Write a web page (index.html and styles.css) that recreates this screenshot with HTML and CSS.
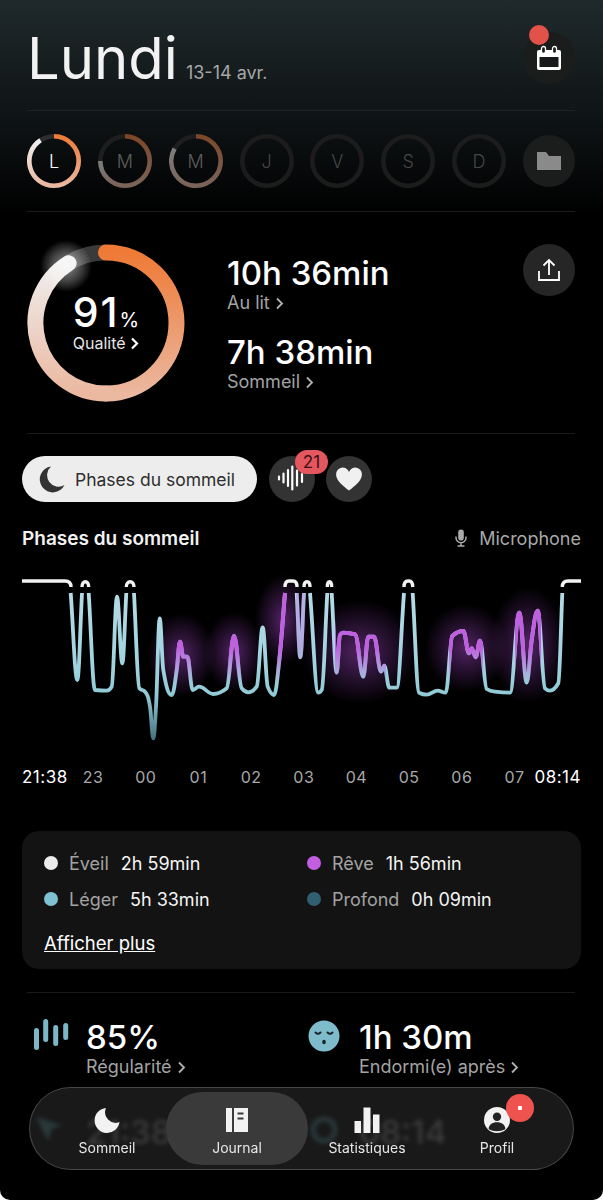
FILE: index.html
```html
<!DOCTYPE html>
<html lang="fr">
<head>
  <meta charset="UTF-8">
  <meta name="viewport" content="width=device-width, initial-scale=1.0">
  <title>Journal de sommeil</title>
  <link rel="stylesheet" href="styles.css">
</head>
<body>
  <div class="app">
    <header class="top">
      <div class="title-group">
        <h1 class="day-title">Lundi</h1>
        <span class="day-date">13-14 avr.</span>
      </div>
      <button class="round-btn calendar-btn">
        <span class="calendar-dot"></span>
        <svg width="28" height="26" viewBox="0 0 28 26">
          <rect x="2" y="5" width="24" height="20" rx="2" fill="#fff"/>
          <rect x="4.5" y="12" width="19" height="10" fill="#17191a"/>
          <rect x="6.5" y="1.5" width="4" height="7" rx="2" fill="#17191a" stroke="#fff" stroke-width="1.3"/>
          <rect x="17.5" y="1.5" width="4" height="7" rx="2" fill="#17191a" stroke="#fff" stroke-width="1.3"/>
        </svg>
      </button>
    </header>

    <section class="days">
      <div class="day-ring day-on">
        <svg width="54" height="54" viewBox="0 0 54 54" fill="none">
          <defs>
            <linearGradient id="arcRight" x1="0" y1="0" x2="0" y2="1">
              <stop offset="0" stop-color="#ee7a36"/>
              <stop offset="1" stop-color="#ebb8a0"/>
            </linearGradient>
            <linearGradient id="arcLeft" x1="0" y1="1" x2="0" y2="0">
              <stop offset="0" stop-color="#ebb8a0"/>
              <stop offset="1" stop-color="#efefef"/>
            </linearGradient>
          </defs>
          <circle cx="27" cy="27" r="24.7" stroke="#2e2e2e" stroke-width="4.6"/>
          <path d="M27 2.3A24.7 24.7 0 0 1 27 51.7" stroke="url(#arcRight)" stroke-width="4.6"/>
          <path d="M27 51.7A24.7 24.7 0 0 1 13.5 6.3" stroke="url(#arcLeft)" stroke-width="4.6"/>
        </svg>
        <span>L</span>
      </div>
      <div class="day-ring">
        <svg width="54" height="54" viewBox="0 0 54 54" fill="none">
          <circle cx="27" cy="27" r="24.7" stroke="#1e1e1e" stroke-width="4.6"/>
          <g opacity="0.45">
            <path d="M27 2.3A24.7 24.7 0 0 1 27 51.7" stroke="url(#arcRight)" stroke-width="4.6"/>
            <path d="M27 51.7A24.7 24.7 0 0 1 2.3 27" stroke="url(#arcLeft)" stroke-width="4.6"/>
          </g>
        </svg>
        <span>M</span>
      </div>
      <div class="day-ring">
        <svg width="54" height="54" viewBox="0 0 54 54" fill="none">
          <circle cx="27" cy="27" r="24.7" stroke="#1e1e1e" stroke-width="4.6"/>
          <g opacity="0.45">
            <path d="M27 2.3A24.7 24.7 0 0 1 27 51.7" stroke="url(#arcRight)" stroke-width="4.6"/>
            <path d="M27 51.7A24.7 24.7 0 0 1 5.6 14.6" stroke="url(#arcLeft)" stroke-width="4.6"/>
          </g>
        </svg>
        <span>M</span>
      </div>
      <div class="day-ring day-off">
        <svg width="54" height="54" viewBox="0 0 54 54" fill="none"><circle cx="27" cy="27" r="24.7" stroke="#1c1c1c" stroke-width="4.6"/></svg>
        <span>J</span>
      </div>
      <div class="day-ring day-off">
        <svg width="54" height="54" viewBox="0 0 54 54" fill="none"><circle cx="27" cy="27" r="24.7" stroke="#1c1c1c" stroke-width="4.6"/></svg>
        <span>V</span>
      </div>
      <div class="day-ring day-off">
        <svg width="54" height="54" viewBox="0 0 54 54" fill="none"><circle cx="27" cy="27" r="24.7" stroke="#1c1c1c" stroke-width="4.6"/></svg>
        <span>S</span>
      </div>
      <div class="day-ring day-off">
        <svg width="54" height="54" viewBox="0 0 54 54" fill="none"><circle cx="27" cy="27" r="24.7" stroke="#1c1c1c" stroke-width="4.6"/></svg>
        <span>D</span>
      </div>
      <button class="round-btn">
        <svg width="24" height="18" viewBox="0 0 24 18"><path d="M0 0h9l3 4h12v14H0z" fill="#8a8a8a"/></svg>
      </button>
    </section>

    <section class="summary">
      <div class="quality">
        <svg class="quality-ring" width="170" height="170" viewBox="0 0 170 170" fill="none">
          <defs>
            <radialGradient id="ringGlow">
              <stop offset="0" stop-color="#fff" stop-opacity="0.55"/>
              <stop offset="0.6" stop-color="#fff" stop-opacity="0.25"/>
              <stop offset="1" stop-color="#fff" stop-opacity="0"/>
            </radialGradient>
          </defs>
          <path d="M47.1 25.2A70.5 70.5 0 0 1 85 14.5" stroke="#3a3a3a" stroke-width="16"/>
          <path d="M85 14.5A70.5 70.5 0 0 1 85 155.5" stroke="url(#arcRight)" stroke-width="16" stroke-linecap="round"/>
          <path d="M85 155.5A70.5 70.5 0 0 1 47.6 25.2" stroke="url(#arcLeft)" stroke-width="16" stroke-linecap="round"/>
          <circle cx="45" cy="28" r="26" fill="url(#ringGlow)"/>
        </svg>
        <div class="quality-text">
          <div class="quality-value">91<small>%</small></div>
          <div class="quality-label">Qualité <svg class="chev" width="9" height="13" viewBox="0 0 9 13"><path d="M2 1.5l5 5-5 5"/></svg></div>
        </div>
      </div>
      <div class="durations">
        <div class="big-value">10h 36min</div>
        <div class="sub-label">Au lit <svg class="chev" width="9" height="13" viewBox="0 0 9 13"><path d="M2 1.5l5 5-5 5"/></svg></div>
        <div class="big-value second">7h 38min</div>
        <div class="sub-label">Sommeil <svg class="chev" width="9" height="13" viewBox="0 0 9 13"><path d="M2 1.5l5 5-5 5"/></svg></div>
      </div>
      <button class="round-btn share-btn">
        <svg width="24" height="24" viewBox="0 0 24 24" fill="none" stroke="#fff" stroke-width="1.8">
          <path d="M2 13v9h20v-9"/>
          <path d="M12 17V2M6.5 7.5L12 2l5.5 5.5"/>
        </svg>
      </button>
    </section>

    <div class="tabs">
      <div class="tab-pill">
        <svg width="26" height="27" viewBox="0 0 26 27"><path d="M12 0.5A13 13 0 1 0 25.5 19A11.5 11.5 0 0 1 12 0.5z" fill="#333"/></svg>
        <span>Phases du sommeil</span>
      </div>
      <div class="tab-icon">
        <svg width="46" height="46" viewBox="0 0 46 46" stroke="#fff" stroke-width="2.2" stroke-linecap="round">
          <path d="M10 20.5v3M14.5 17.5v9M19 14v16M23.3 10.5v23M28 14.5v15M33 18v8"/>
        </svg>
        <span class="tab-badge">21</span>
      </div>
      <div class="tab-icon">
        <svg width="28" height="24" viewBox="0 0 30 26"><path d="M15 25.5C9 20.5 1 15 1 8A7.2 7.2 0 0 1 15 5.5A7.2 7.2 0 0 1 29 8C29 15 21 20.5 15 25.5z" fill="#f0f0f0"/></svg>
      </div>
    </div>

    <div class="chart-head">
      <h2>Phases du sommeil</h2>
      <div class="mic">
        <svg width="12" height="18" viewBox="0 0 12 18" fill="none" stroke="#aaa" stroke-width="1.5">
          <rect x="3.2" y="0.5" width="5.6" height="11" rx="2.8" fill="#aaa" stroke="none"/>
          <path d="M1 7.5v1.2a5 5 0 0 0 10 0V7.5M6 13.7v3M2.5 17h7"/>
        </svg>
        <span>Microphone</span>
      </div>
    </div>

    <svg class="chart" width="603" height="190" viewBox="0 570 603 190" fill="none">
      <defs>
        <linearGradient id="lineBlue" gradientUnits="userSpaceOnUse" x1="0" y1="593" x2="0" y2="740">
          <stop offset="0" stop-color="#b4dbe6"/>
          <stop offset="0.5" stop-color="#9fd3de"/>
          <stop offset="0.7" stop-color="#90c9d5"/>
          <stop offset="1" stop-color="#44707f"/>
        </linearGradient>
        <linearGradient id="dreamFade" gradientUnits="userSpaceOnUse" x1="0" y1="648" x2="0" y2="684">
          <stop offset="0" stop-color="#fff"/>
          <stop offset="1" stop-color="#000"/>
        </linearGradient>
        <radialGradient id="dreamGlow">
          <stop offset="0" stop-color="#b04cd8" stop-opacity="0.46"/>
          <stop offset="0.55" stop-color="#b04cd8" stop-opacity="0.2"/>
          <stop offset="1" stop-color="#b04cd8" stop-opacity="0"/>
        </radialGradient>
        <mask id="dreamMask" maskUnits="userSpaceOnUse" x="0" y="570" width="603" height="190">
          <rect x="172" y="570" width="20" height="190" fill="url(#dreamFade)"/>
          <rect x="226" y="570" width="16" height="190" fill="url(#dreamFade)"/>
          <rect x="272" y="570" width="16" height="190" fill="url(#dreamFade)"/>
          <rect x="296" y="570" width="9" height="190" fill="url(#dreamFade)" opacity="0.35"/>
          <rect x="335" y="570" width="51" height="190" fill="url(#dreamFade)"/>
          <rect x="449" y="570" width="34" height="190" fill="url(#dreamFade)"/>
          <rect x="515" y="570" width="26" height="190" fill="url(#dreamFade)"/>
        </mask>
      </defs>
      <ellipse cx="181" cy="655" rx="34" ry="42" fill="url(#dreamGlow)"/>
      <ellipse cx="234" cy="652" rx="30" ry="40" fill="url(#dreamGlow)"/>
      <ellipse cx="283" cy="620" rx="28" ry="46" fill="url(#dreamGlow)"/>
      <ellipse cx="360" cy="652" rx="58" ry="52" fill="url(#dreamGlow)"/>
      <ellipse cx="466" cy="648" rx="42" ry="44" fill="url(#dreamGlow)"/>
      <ellipse cx="528" cy="645" rx="38" ry="58" fill="url(#dreamGlow)"/>
      <path id="sleepLine" stroke="url(#lineBlue)" stroke-width="3.8" stroke-linejoin="round"/>
      <path id="sleepDream" stroke="#c060e0" stroke-width="4" stroke-linejoin="round" mask="url(#dreamMask)"/>
      <path stroke="#f2f2f2" stroke-width="3.4" d="M22 581H65Q71 581 71 587M82 587C82 580 88.7 580 88.7 587M126.3 587C126.3 580 134 580 134 587M285 587Q285 581 289 581H293Q297 581 297 587M304 587C304 580 310 580 310 587M327.3 587C327.3 580 331.7 580 331.7 587M404 587Q404 581 408 581H409Q412.7 581 412.7 587M562.3 587Q562.3 581 568 581H581"/>
    </svg>

    <div class="axis">
      <span class="axis-end">21:38</span>
      <span>23</span><span>00</span><span>01</span><span>02</span><span>03</span><span>04</span><span>05</span><span>06</span><span>07</span>
      <span class="axis-end axis-last">08:14</span>
    </div>

    <div class="legend-card">
      <div class="legend-grid">
        <div class="legend-row"><i class="dot dot-awake"></i><span class="legend-name">Éveil</span><span class="legend-time">2h 59min</span></div>
        <div class="legend-row"><i class="dot dot-dream"></i><span class="legend-name">Rêve</span><span class="legend-time">1h 56min</span></div>
        <div class="legend-row"><i class="dot dot-light"></i><span class="legend-name">Léger</span><span class="legend-time">5h 33min</span></div>
        <div class="legend-row"><i class="dot dot-deep"></i><span class="legend-name">Profond</span><span class="legend-time">0h 09min</span></div>
      </div>
      <a class="more-link" href="#">Afficher plus</a>
    </div>

    <div class="stats">
      <svg class="stat-icon" width="36" height="36" viewBox="0 0 36 36" stroke="#7ab8c8" stroke-width="5" stroke-linecap="round">
        <path d="M2.5 12.5v17M11.7 3.5v18M21.7 9.5v16M31.7 7.5v12"/>
      </svg>
      <div>
        <div class="big-value">85%</div>
        <div class="sub-label">Régularité <svg class="chev" width="9" height="13" viewBox="0 0 9 13"><path d="M2 1.5l5 5-5 5"/></svg></div>
      </div>
      <svg class="stat-icon stat-face" width="32" height="32" viewBox="0 0 32 32" fill="none">
        <circle cx="16" cy="16" r="15.5" fill="#7fbccb"/>
        <path d="M7.5 12.5q2.5 2.500 5 0M19.5 12.5q2.500 2.500 5 0" stroke="#16262b" stroke-width="2" stroke-linecap="round"/>
        <ellipse cx="16" cy="22" rx="1.8" ry="2.2" fill="#16262b"/>
      </svg>
      <div>
        <div class="big-value">1h 30m</div>
        <div class="sub-label">Endormi(e) après <svg class="chev" width="9" height="13" viewBox="0 0 9 13"><path d="M2 1.5l5 5-5 5"/></svg></div>
      </div>
    </div>

    <div class="stats stats-behind">
      <svg class="stat-icon" width="36" height="30" viewBox="0 0 36 30"><path d="M2 4l26 8-10 4-4 12z" fill="#5fa8bd"/></svg>
      <div class="big-value">21:38</div>
      <svg class="stat-icon" width="32" height="32" viewBox="0 0 32 32" fill="none" stroke="#5fa8bd" stroke-width="5"><circle cx="16" cy="17" r="11"/></svg>
      <div class="big-value">08:14</div>
    </div>

    <nav class="tabbar">
      <a class="nav-item" href="#">
        <svg width="26" height="26" viewBox="0 0 26 26"><path d="M12 1A12.5 12.5 0 1 0 25.5 15A10.5 10.5 0 0 1 12 1z" fill="#f2f2f2"/></svg>
        <span>Sommeil</span>
      </a>
      <a class="nav-item nav-active" href="#">
        <svg width="24" height="26" viewBox="0 0 24 26">
          <path d="M1 1h6v24H1zM9 1h14v24H9z" fill="#f2f2f2"/>
          <path d="M12.5 6.5h6M12.5 11.5h6" stroke="#3a3a3a" stroke-width="1.8"/>
        </svg>
        <span>Journal</span>
      </a>
      <a class="nav-item" href="#">
        <svg width="26" height="26" viewBox="0 0 26 26"><path d="M0.5 14h6.5v12H0.5zM9.5 0.5h7V26h-7zM19 7.5h6.5V26H19z" fill="#f2f2f2"/></svg>
        <span>Statistiques</span>
      </a>
      <a class="nav-item" href="#">
        <svg width="28" height="28" viewBox="0 0 28 28">
          <circle cx="14" cy="14" r="14" fill="#f2f2f2"/>
          <circle cx="14" cy="10.5" r="4.5" fill="#222"/>
          <path d="M5 24c0-5 4-7.5 9-7.5s9 2.5 9 7.5q-4 2-9 2t-9-2z" fill="#222"/>
        </svg>
        <span>Profil</span>
        <i class="nav-badge"></i>
      </a>
    </nav>
  </div>
  <script src="script.js"></script>
</body>
</html>
```

FILE: styles.css
```css
* {
  box-sizing: border-box;
}
body {
  margin: 0;
  background-color: #fff;
  font-family: Inter, "Liberation Sans", sans-serif;
  color: #fff;
}
.app {
  position: relative;
  width: 603px;
  height: 1200px;
  overflow: hidden;
  border-radius: 0 0 10px 10px;
  background: linear-gradient(#1f292b 0, #101517 110px, #000 215px);
}
.round-btn {
  display: flex;
  align-items: center;
  justify-content: center;
  width: 52px;
  height: 52px;
  padding: 0;
  border: none;
  border-radius: 50%;
  background-color: #1b1c1c;
}

/* en-tete */
.top {
  display: flex;
  justify-content: space-between;
  align-items: flex-start;
  height: 111px;
  margin: 0 28px 0 27px;
  border-bottom: 1px solid #1d2325;
}
.title-group {
  display: flex;
  align-items: baseline;
  gap: 8px;
  margin: 24px 0 0 0;
}
.day-title {
  margin: 0;
  font-size: 58px;
  line-height: 68px;
  font-weight: 400;
  color: #f2f2f2;
}
.day-date {
  font-size: 18px;
  color: #a6a6a6;
}
.calendar-btn {
  position: relative;
  margin-top: 32px;
}
.calendar-dot {
  position: absolute;
  left: 6px;
  top: -7px;
  width: 20px;
  height: 20px;
  border-radius: 50%;
  background-color: #e2524a;
}

/* jours */
.days {
  display: flex;
  justify-content: space-between;
  align-items: center;
  height: 101px;
  margin: 0 28px 0 27px;
  border-bottom: 1px solid #191b1c;
}
.day-ring {
  display: grid;
  place-items: center;
  width: 54px;
  height: 54px;
  font-size: 18px;
  font-weight: 300;
  color: #5e5e5e;
}
.day-ring > * {
  grid-area: 1 / 1;
}
.day-on {
  color: #fff;
}
.day-off {
  color: #464646;
}

/* resume */
.summary {
  display: flex;
  align-items: flex-start;
  height: 222px;
  margin: 0 28px 0 27px;
  padding-top: 32px;
  border-bottom: 1px solid #1a1a1a;
}
.quality {
  display: grid;
  place-items: center;
  width: 158px;
  height: 158px;
}
.quality > * {
  grid-area: 1 / 1;
}
.quality-ring {
  margin: -6px;
}
.quality-text {
  padding-top: 2px;
  text-align: center;
}
.quality-value {
  font-size: 41px;
  line-height: 34px;
  font-weight: 500;
  letter-spacing: 2px;
}
.quality-value small {
  font-size: 20px;
  font-weight: 400;
  letter-spacing: 0;
}
.quality-label {
  margin-top: -4px;
  font-size: 16px;
  line-height: 20px;
  color: #e6e6e6;
}
.quality-label .chev {
  stroke: #fff;
  stroke-width: 2.2;
}
.chev {
  fill: none;
  stroke: #b0b0b0;
  stroke-width: 1.8;
  vertical-align: -1px;
}
.durations {
  flex: 1;
  margin-left: 42px;
  padding-top: 10px;
}
.big-value {
  font-size: 33px;
  line-height: 38px;
  font-weight: 500;
}
.big-value.second {
  margin-top: 19px;
}
.sub-label {
  font-size: 18px;
  line-height: 22px;
  color: #a3a3a3;
}
.share-btn {
  background-color: #262626;
}

/* onglets */
.tabs {
  display: flex;
  align-items: center;
  gap: 11px;
  height: 46px;
  margin: 22px 0 0 22px;
}
.tab-pill {
  display: flex;
  align-items: center;
  gap: 10px;
  width: 235px;
  height: 46px;
  padding-left: 17px;
  margin-right: 1px;
  border-radius: 23px;
  background-color: #ededed;
  font-size: 17.5px;
  color: #2e2e2e;
}
.tab-icon {
  position: relative;
  display: flex;
  align-items: center;
  justify-content: center;
  width: 46px;
  height: 46px;
  border-radius: 50%;
  background-color: #333;
}
.tab-badge {
  position: absolute;
  left: 26px;
  top: -6px;
  width: 33px;
  height: 24px;
  border-radius: 12px;
  background-color: #e5575f;
  color: #3a1214;
  font-size: 17px;
  line-height: 24px;
  text-align: center;
}

/* graphique */
.chart-head {
  display: flex;
  justify-content: space-between;
  align-items: center;
  height: 24px;
  margin: 24px 22px 0;
}
.chart-head h2 {
  margin: 0;
  font-size: 19px;
  font-weight: 600;
  color: #f2f2f2;
}
.mic {
  display: flex;
  align-items: center;
  gap: 12px;
  font-size: 18px;
  color: #a8a8a8;
}
.chart {
  display: block;
  margin-top: 20px;
}
.axis {
  display: grid;
  grid-template-columns: 44.7px repeat(9, 52.7px) minmax(0, 1fr);
  height: 22px;
  margin: 6px 22px 0;
  font-size: 16px;
  line-height: 22px;
  letter-spacing: 0.5px;
  text-align: center;
  color: #a8a8a8;
}
.axis-end {
  font-size: 17px;
  color: #fff;
  white-space: nowrap;
  text-align: left;
}
.axis-last {
  justify-self: end;
}

/* legende */
.legend-card {
  height: 138px;
  margin: 43px 22px 0;
  padding: 14px 22px 0;
  border-radius: 17px;
  background-color: #131313;
}
.legend-grid {
  display: grid;
  grid-template-columns: 263px 1fr;
  grid-auto-rows: 36px;
}
.legend-row {
  display: flex;
  align-items: center;
  font-size: 18px;
}
.dot {
  width: 14px;
  height: 14px;
  margin-right: 11px;
  border-radius: 50%;
}
.dot-awake { background-color: #ececec; }
.dot-dream { background-color: #c25fe0; }
.dot-light { background-color: #7fc0d2; }
.dot-deep { background-color: #2f5f70; }
.legend-name {
  margin-right: 12px;
  color: #a3a3a3;
}
.legend-time {
  color: #f5f5f5;
}
.more-link {
  display: inline-block;
  margin-top: 13px;
  font-size: 18.5px;
  line-height: 26px;
  color: #fff;
}

/* stats du bas */
.stats {
  display: grid;
  grid-template-columns: 52px 222px 51px 1fr;
  height: 88px;
  margin: 23px 28px 0 27px;
  padding: 25px 0 0 7px;
  border-top: 1px solid #1a1a1a;
}
.stat-face {
  margin-top: 2px;
}
.stats-behind {
  height: 60px;
  margin-top: 0;
  padding-top: 33px;
  border-top: none;
}
.stats-behind .big-value {
  color: #bbb;
}

/* barre de navigation */
.tabbar {
  position: absolute;
  left: 29px;
  bottom: 30px;
  display: grid;
  grid-template-columns: repeat(4, 130px);
  width: 545px;
  height: 83px;
  padding-left: 12px;
  border: 1px solid rgba(255, 255, 255, 0.2);
  border-radius: 42px;
  background-color: rgba(30, 30, 30, 0.82);
  backdrop-filter: blur(2px);
  isolation: isolate;
}
.nav-item {
  position: relative;
  display: flex;
  flex-direction: column;
  align-items: center;
  height: 81px;
  padding-top: 19px;
  gap: 6px;
  font-size: 14px;
  line-height: 18px;
  color: #e6e6e6;
  text-decoration: none;
}
.nav-item svg {
  height: 26px;
}
.nav-active::before {
  content: "";
  position: absolute;
  z-index: -1;
  inset: 4px -6px 4px;
  border-radius: 37px;
  background-color: #3a3a3a;
}
.nav-badge {
  position: absolute;
  left: 74px;
  top: 6px;
  width: 28px;
  height: 28px;
  border-radius: 50%;
  background: radial-gradient(circle, #fff 2px, #ee5350 2.5px);
}
```

FILE: script.js
```js
// points de la courbe, coupee a chaque passage en eveil
const segments = [
  [[70.7,593],[77.3,680],[82,593]],
  [[88.7,593],[95,690],[106.7,690.7],[111.7,686.7],[117,596.7],[122.3,663.3],[126.3,593]],
  [[134,593],[139.3,688.3],[145,691.7],[150,706.7],[153.3,738.3],[156,706.7],[159.7,618.3],[163.3,670],[171.7,695],[176.7,670],[180,641.7],[183.3,656.7],[187.3,656.7],[192.7,690],[199,686.7],[213.3,694],[226.7,688.3],[234,636],[241.7,688.3],[248.3,692.3],[256.7,686.7],[262.7,627.3],[267.7,686.7],[274,695],[279.3,660],[285,593]],
  [[296.7,593],[300.3,657.3],[304,593]],
  [[310,593],[318.3,692.7],[321.7,690],[327.3,593]],
  [[331.7,593],[336.7,672.7],[340,635],[343.3,632.7],[355,634.3],[363.3,676.7],[368.3,636.7],[374,636.7],[381,671.7],[384.3,665.7],[389.3,687.7],[396.7,687.7],[404,593]],
  [[412.7,593],[419,692.7],[426.7,694.7],[437.7,690.7],[445.7,692.7],[452.3,636],[463.3,631],[469,653.3],[471.7,648.3],[475.7,657.3],[480,640.7],[486.7,689],[495,691.7],[510,692.7],[519.3,612.7],[526.7,682.7],[531.7,640],[537.7,610.7],[545,688.3],[550,690.7],[558.3,683.3],[562.3,593]]
];

// pente limitee pour que la courbe ne depasse pas les points
function slopeAt(points, i) {
  const prev = points[i - 1];
  const cur = points[i];
  const next = points[i + 1];
  if (!prev) return (next[1] - cur[1]) / (next[0] - cur[0]);
  if (!next) return (cur[1] - prev[1]) / (cur[0] - prev[0]);
  const h0 = cur[0] - prev[0];
  const h1 = next[0] - cur[0];
  const s0 = (cur[1] - prev[1]) / h0;
  const s1 = (next[1] - cur[1]) / h1;
  const p = (s0 * h1 + s1 * h0) / (h0 + h1);
  return (Math.sign(s0) + Math.sign(s1)) * Math.min(Math.abs(s0), Math.abs(s1), 0.5 * Math.abs(p));
}

function smoothPath(points) {
  let d = `M${points[0][0]} ${points[0][1]}`;
  for (let i = 1; i < points.length; i++) {
    const a = points[i - 1];
    const b = points[i];
    const dx = (b[0] - a[0]) / 2.6;
    const c1y = a[1] + slopeAt(points, i - 1) * dx;
    const c2y = b[1] - slopeAt(points, i) * dx;
    d += `C${(a[0] + dx).toFixed(1)} ${c1y.toFixed(1)} ${(b[0] - dx).toFixed(1)} ${c2y.toFixed(1)} ${b[0]} ${b[1]}`;
  }
  return d;
}

const line = segments.map(smoothPath).join("");
document.getElementById("sleepLine").setAttribute("d", line);
document.getElementById("sleepDream").setAttribute("d", line);
```
